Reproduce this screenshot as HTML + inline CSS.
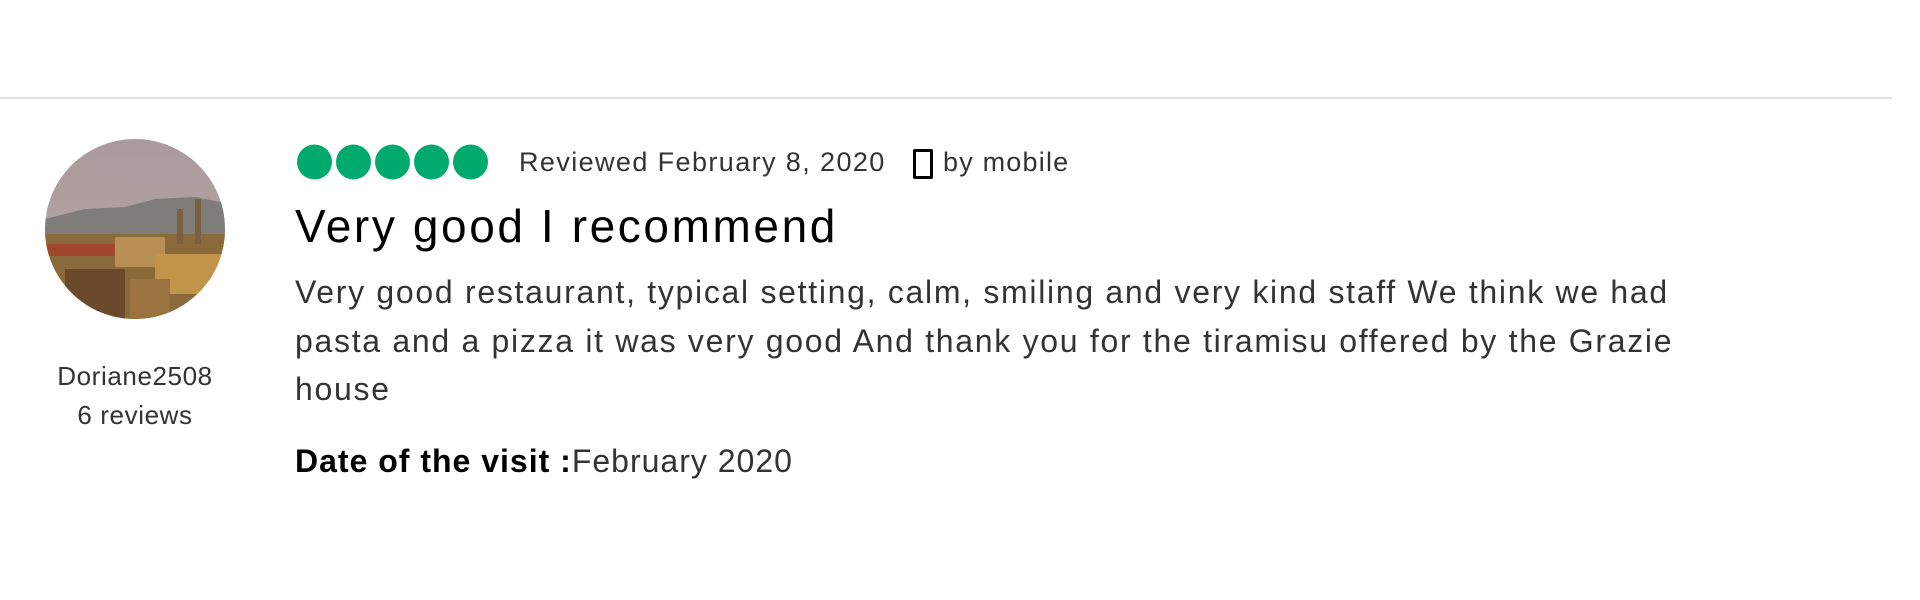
<!DOCTYPE html>
<html><head><meta charset="utf-8"><style>
body{margin:0;width:1920px;height:600px;background:#fff;overflow:hidden;font-family:"Liberation Sans",sans-serif;position:relative}
.a{position:absolute;white-space:nowrap}
</style></head><body>
<div class="a" style="left:0;top:97px;width:1892px;height:2px;background:#e0e0e0"></div>
<svg class="a" style="left:45px;top:139px" width="180" height="180" viewBox="0 0 180 180">
<defs><clipPath id="c"><circle cx="90" cy="90" r="90"/></clipPath>
<linearGradient id="s" x1="0" y1="0" x2="0" y2="1"><stop offset="0" stop-color="#a99a9c"/><stop offset="1" stop-color="#b9a8a3"/></linearGradient></defs>
<g clip-path="url(#c)">
<rect width="180" height="180" fill="url(#s)"/>
<path d="M0 80 L40 70 L80 68 L110 60 L150 58 L180 64 L180 110 L0 110Z" fill="#7e7d7a"/>
<rect x="0" y="95" width="180" height="85" fill="#8a6a3a"/>
<rect x="0" y="105" width="70" height="12" fill="#a0472c"/>
<rect x="70" y="98" width="50" height="30" fill="#b89053"/>
<rect x="110" y="115" width="70" height="40" fill="#c0954a"/>
<rect x="20" y="130" width="60" height="50" fill="#6a4a2a"/>
<rect x="85" y="140" width="40" height="40" fill="#9a7340"/>
<rect x="150" y="60" width="6" height="45" fill="#7a6040"/>
<rect x="132" y="70" width="6" height="35" fill="#7a6040"/>
</g></svg>
<div class="a" style="left:0;width:270px;text-align:center;top:361px;font-size:26px;letter-spacing:0.6px;color:#333">Doriane2508</div>
<div class="a" style="left:0;width:270px;text-align:center;top:400px;font-size:26px;letter-spacing:0.6px;color:#333">6 reviews</div>
<svg class="a" style="left:297px;top:144px" width="200" height="36">
<circle cx="17.5" cy="18" r="17.5" fill="#00aa6c"/><circle cx="56.5" cy="18" r="17.5" fill="#00aa6c"/><circle cx="95.5" cy="18" r="17.5" fill="#00aa6c"/><circle cx="134.5" cy="18" r="17.5" fill="#00aa6c"/><circle cx="173.5" cy="18" r="17.5" fill="#00aa6c"/>
</svg>
<div class="a" style="left:519px;top:147px;font-size:27px;letter-spacing:1.4px;color:#333">Reviewed February 8, 2020</div>
<div class="a" style="left:913px;top:149px;width:14px;height:24px;border:3px solid #000;border-radius:2px"></div>
<div class="a" style="left:943px;top:147px;font-size:27px;letter-spacing:1.2px;color:#333">by mobile</div>
<div class="a" style="left:295px;top:199px;font-size:46px;letter-spacing:2.6px;color:#000">Very good I recommend</div>
<div class="a" style="left:295px;top:268px;font-size:32px;letter-spacing:1.7px;color:#333;line-height:48.5px">Very good restaurant, typical setting, calm, smiling and very kind staff We think we had<br>pasta and a pizza it was very good And thank you for the tiramisu offered by the Grazie<br>house</div>
<div class="a" style="left:295px;top:443px;font-size:32px;letter-spacing:1px;color:#000"><b>Date of the visit :</b><span style="color:#333">February 2020</span></div>
</body></html>
